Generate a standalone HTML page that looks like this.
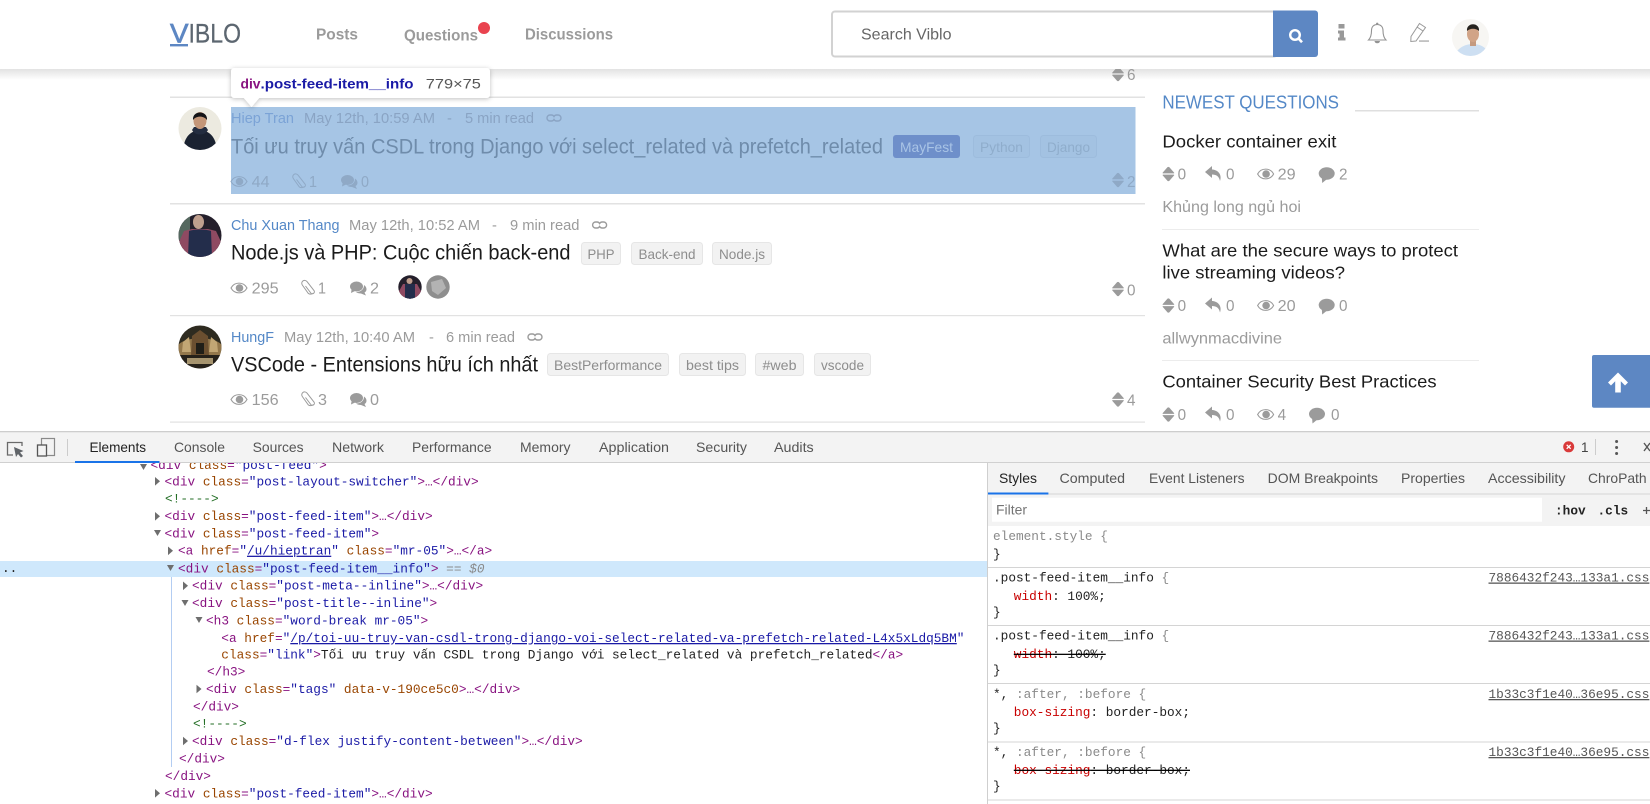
<!DOCTYPE html>
<html lang="vi"><head><meta charset="utf-8"><title>Viblo</title>
<style>
html,body{margin:0;padding:0;background:#fff;overflow:hidden}
svg{display:block;filter:blur(.3px)}
text{font-family:"Liberation Sans",sans-serif;white-space:pre}
.nav{font-size:15.7px;font-weight:700;fill:#9b9b9b}
.au{font-size:14.7px;fill:#5488c7}
.d{font-size:14.7px;fill:#9b9b9b}
.ti{font-size:21px;fill:#1b1b1b}
.tg{font-size:13.8px;fill:#8d8d8d;text-anchor:middle}
.st{font-size:15.8px;fill:#9b9b9b}
.h .au{fill:#7ba3d6}.h .d{fill:#8aa4c4}.h .ti{fill:#6f8cab}.h .st{fill:#8fa9c6}
.sq{font-size:17.8px;fill:#1b1b1b}
.sm{font-size:15.8px;fill:#9b9b9b}
.tb{font-size:13.7px;fill:#555}
.mo text,text.mo{font-family:"Liberation Mono",monospace;font-size:12.78px}
.t{fill:#881280}.n{fill:#994500}.v{fill:#1a1aa6}.c{fill:#236e25}.g{fill:#8a8a8a}.k{fill:#222}.r{fill:#c80000}
</style></head>
<body>
<svg width="1650" height="804" viewBox="0 0 1650 804" xmlns="http://www.w3.org/2000/svg">
<defs>
<linearGradient id="sh" x1="0" y1="0" x2="0" y2="1"><stop offset="0" stop-color="#e2e2e2"/><stop offset="1" stop-color="#fff"/></linearGradient>
<filter id="ds" x="-10%" y="-30%" width="120%" height="170%"><feDropShadow dx="0" dy="1" stdDeviation="2.5" flood-color="#000" flood-opacity=".25"/></filter>
<clipPath id="c1"><ellipse cx="200" cy="128.500" rx="21.500" ry="21.500"/></clipPath>
<clipPath id="c2"><circle cx="200" cy="235.500" r="21.500"/></clipPath>
<clipPath id="c3"><circle cx="200" cy="347" r="21.500"/></clipPath>
<clipPath id="c4"><circle cx="410" cy="287" r="11.700"/></clipPath>
<clipPath id="c5"><circle cx="438" cy="287" r="11.700"/></clipPath>
<clipPath id="c6"><circle cx="1470.500" cy="37.500" r="18.500"/></clipPath>
<g id="eye"><path d="M0 0C3.500-6.500 12.500-6.500 16 0 12.500 6.500 3.500 6.500 0 0Z" fill="none" stroke="currentColor" stroke-width="1.100"/><circle cx="8.500" cy="0" r="3.800" fill="currentColor"/></g>
<g id="clip"><path d="M4.500-2 9.800 5a2 2 0 0 0 3.200-2.400L6-6.400a2.900 2.900 0 0 0-4.700 3.400L7.200 5.300a4 4 0 0 0 5.300-.3" fill="none" stroke="currentColor" stroke-width="1"/></g>
<g id="cm2"><ellipse cx="6.500" cy="-1.500" rx="6.500" ry="5" fill="currentColor"/><path d="M2-1 1 5 6 2.500Z" fill="currentColor"/><path d="M14-3C17-1 17.500 3 14.500 4.500L16 7.500 11 5.500C9 5.500 7 5 6 4 10 4 14 2 14-3Z" fill="currentColor"/></g>
<g id="cm1"><ellipse cx="8" cy="-1" rx="8" ry="6.200" fill="currentColor"/><path d="M3 2 3.500 8.500 9 4Z" fill="currentColor"/></g>
<path id="rp" d="M7-7 0-1 7 5V1.500C11 1.500 14 3 15 8 17.500 1 12-3.500 7-3.500Z" fill="currentColor"/>
<g id="vt"><path d="M5-6.700a1.300 1.300 0 0 1 2 0L11.600-1.500a.5.5 0 0 1-.4.9H.8a.5.5 0 0 1-.4-.9Z" fill="currentColor"/><path d="M.8.600H11.200a.5.5 0 0 1 .4.9L7 6.700a1.300 1.300 0 0 1-2 0L.4 1.500a.5.5 0 0 1 .4-.9Z" fill="currentColor"/></g>
<path id="lnk" d="M5.500-3H4A3 3 0 0 0 4 3H5.500A3 3 0 0 0 8 1.500 3 3 0 0 0 10.500 3H12A3 3 0 0 0 12-3H10.500A3 3 0 0 0 8-1.500 3 3 0 0 0 5.500-3Z" fill="none" stroke="currentColor" stroke-width="1.400"/>
</defs>

<rect width="1650" height="804" fill="#fff"/>

<!-- post list lines -->
<g fill="#e2e2e2"><rect x="170" y="96.500" width="975" height="1.500"/><rect x="170" y="203" width="975" height="1.500"/><rect x="170" y="315" width="975" height="1.200"/><rect x="170" y="421.500" width="975" height="1.200"/></g>

<!-- shadow -->
<rect x="0" y="69" width="1650" height="11" fill="url(#sh)"/>
<use href="#vt" x="1112" y="74" color="#9b9b9b"/>
<text class="st" x="1127" y="80" textLength="8.500" lengthAdjust="spacingAndGlyphs">6</text>

<!-- POST 1 -->
<g clip-path="url(#c1)"><rect x="178" y="107" width="44" height="44" fill="#eceae0"/><path d="M183 151C184 137 190 131 200 130 210 131 216 137 217 151Z" fill="#1a2231"/><path d="M192 130C195 136 205 136 208 130L206 127H194Z" fill="#232d40"/><ellipse cx="200" cy="120.500" rx="6.500" ry="8.500" fill="#c39678"/><path d="M193 120C192 110 208 110 207 120 204 115.500 196 115.500 193 120Z" fill="#141417"/></g>
<rect x="231" y="107" width="904.500" height="87" fill="#a6c5e5"/>
<g class="h">
<text class="au" x="231" y="123" textLength="63" lengthAdjust="spacingAndGlyphs">Hiep Tran</text>
<text class="d" x="304" y="123" textLength="131" lengthAdjust="spacingAndGlyphs">May 12th, 10:59 AM</text>
<text class="d" x="447" y="123">-</text>
<text class="d" x="465" y="123" textLength="69" lengthAdjust="spacingAndGlyphs">5 min read</text>
<use href="#lnk" x="546" y="118" color="#8aa4c4"/>
<text class="ti" x="231" y="153.500" textLength="652" lengthAdjust="spacingAndGlyphs">Tối ưu truy vấn CSDL trong Django với select_related và prefetch_related</text>
<rect x="893" y="135" width="67" height="23" rx="3" fill="#6e8fca"/>
<text class="tg" x="926.500" y="152" style="fill:#a9c4e6" textLength="53" lengthAdjust="spacingAndGlyphs">MayFest</text>
<rect x="973.500" y="135.500" width="56" height="22" rx="3" fill="#a3c2e2" stroke="#9dbcdd"/>
<text class="tg" x="1001.500" y="152" style="fill:#8fadcc" textLength="43" lengthAdjust="spacingAndGlyphs">Python</text>
<rect x="1040.500" y="135.500" width="56" height="22" rx="3" fill="#a3c2e2" stroke="#9dbcdd"/>
<text class="tg" x="1068.500" y="152" style="fill:#8fadcc" textLength="43" lengthAdjust="spacingAndGlyphs">Django</text>
<use href="#eye" x="231" y="181.500" color="#8fa9c6"/>
<text class="st" x="251.600" y="187" textLength="18" lengthAdjust="spacingAndGlyphs">44</text>
<use href="#clip" x="292" y="181.500" color="#8fa9c6"/>
<text class="st" x="309" y="187" textLength="8" lengthAdjust="spacingAndGlyphs">1</text>
<use href="#cm2" x="341" y="181.500" color="#8fa9c6"/>
<text class="st" x="361" y="187" textLength="8" lengthAdjust="spacingAndGlyphs">0</text>
<use href="#vt" x="1112" y="180" color="#8fa9c6"/>
<text class="st" x="1127" y="187" textLength="8.500" lengthAdjust="spacingAndGlyphs">2</text>
</g>

<!-- POST 2 -->
<g clip-path="url(#c2)"><rect x="178" y="214" width="44" height="44" fill="#241f2b"/><path d="M178 214H190V240H178Z" fill="#55685f"/><path d="M178 244 184 231 192 229H208L216 231 222 244 216 258H184Z" fill="#8f4a62"/><path d="M189 231C194 229 206 229 211 231L212 258H188Z" fill="#232d4b"/><ellipse cx="198.500" cy="222" rx="5.500" ry="7" fill="#bf9f8e"/></g>
<text class="au" x="231" y="230" textLength="108.500" lengthAdjust="spacingAndGlyphs">Chu Xuan Thang</text>
<text class="d" x="349" y="230" textLength="131" lengthAdjust="spacingAndGlyphs">May 12th, 10:52 AM</text>
<text class="d" x="492" y="230">-</text>
<text class="d" x="510" y="230" textLength="69.500" lengthAdjust="spacingAndGlyphs">9 min read</text>
<use href="#lnk" x="591.600" y="225" color="#9b9b9b"/>
<text class="ti" x="231" y="259.500" textLength="339.500" lengthAdjust="spacingAndGlyphs">Node.js và PHP: Cuộc chiến back-end</text>
<g fill="#f2f2f2" stroke="#e6e6e6"><rect x="581.500" y="242.500" width="39" height="22" rx="3"/><rect x="631.500" y="242.500" width="71" height="22" rx="3"/><rect x="712.500" y="242.500" width="59" height="22" rx="3"/></g>
<text class="tg" x="601" y="259" textLength="27" lengthAdjust="spacingAndGlyphs">PHP</text>
<text class="tg" x="667" y="259" textLength="57" lengthAdjust="spacingAndGlyphs">Back-end</text>
<text class="tg" x="742" y="259" textLength="46" lengthAdjust="spacingAndGlyphs">Node.js</text>
<use href="#eye" x="231" y="288" color="#9b9b9b"/>
<text class="st" x="251.600" y="293.500" textLength="27" lengthAdjust="spacingAndGlyphs">295</text>
<use href="#clip" x="301" y="288" color="#9b9b9b"/>
<text class="st" x="318" y="293.500" textLength="8" lengthAdjust="spacingAndGlyphs">1</text>
<use href="#cm2" x="350" y="288" color="#9b9b9b"/>
<text class="st" x="370" y="293.500" textLength="9" lengthAdjust="spacingAndGlyphs">2</text>
<g clip-path="url(#c4)"><rect x="398" y="275" width="24" height="24" fill="#241f2b"/><path d="M398 293 403 284H417L422 293V299H398Z" fill="#8f4a62"/><rect x="405" y="284" width="10" height="15" fill="#232d4b"/><circle cx="409.500" cy="281" r="3" fill="#bf9f8e"/></g>
<g clip-path="url(#c5)"><rect x="426" y="275" width="24" height="24" fill="#8e8e8e"/><path d="M431 282 442 279 446 288 438 295 432 291Z" fill="#b3b3b3"/></g>
<use href="#vt" x="1112" y="289" color="#9b9b9b"/>
<text class="st" x="1127" y="295.500" textLength="8.500" lengthAdjust="spacingAndGlyphs">0</text>

<!-- POST 3 -->
<g clip-path="url(#c3)"><rect x="178" y="325" width="44" height="44" fill="#2e2b20"/><path d="M178 345C186 336 214 336 222 345V358H178Z" fill="#94784c"/><path d="M183 342 189 337 191 352H182ZM209 352 211 337 217 342 218 352Z" fill="#c2a674"/><path d="M192 336 200 330 208 336 209 356H191Z" fill="#6b4f30"/><rect x="196" y="343" width="8" height="11" fill="#201e18"/><rect x="178" y="355" width="44" height="14" fill="#26211a"/><rect x="187" y="358" width="26" height="6" fill="#a6946f"/></g>
<text class="au" x="231" y="342" textLength="43" lengthAdjust="spacingAndGlyphs">HungF</text>
<text class="d" x="284" y="342" textLength="131" lengthAdjust="spacingAndGlyphs">May 12th, 10:40 AM</text>
<text class="d" x="429" y="342">-</text>
<text class="d" x="446" y="342" textLength="69" lengthAdjust="spacingAndGlyphs">6 min read</text>
<use href="#lnk" x="527" y="337" color="#9b9b9b"/>
<text class="ti" x="231" y="371.500" textLength="307" lengthAdjust="spacingAndGlyphs">VSCode - Entensions hữu ích nhất</text>
<g fill="#f2f2f2" stroke="#e6e6e6"><rect x="547.500" y="353.500" width="121" height="22" rx="3"/><rect x="679.500" y="353.500" width="66" height="22" rx="3"/><rect x="755.500" y="353.500" width="48" height="22" rx="3"/><rect x="814.500" y="353.500" width="56" height="22" rx="3"/></g>
<text class="tg" x="608" y="370" textLength="108" lengthAdjust="spacingAndGlyphs">BestPerformance</text>
<text class="tg" x="712.500" y="370" textLength="53" lengthAdjust="spacingAndGlyphs">best tips</text>
<text class="tg" x="779.500" y="370" textLength="34" lengthAdjust="spacingAndGlyphs">#web</text>
<text class="tg" x="842.500" y="370" textLength="43" lengthAdjust="spacingAndGlyphs">vscode</text>
<use href="#eye" x="231" y="399.500" color="#9b9b9b"/>
<text class="st" x="251.600" y="405" textLength="27" lengthAdjust="spacingAndGlyphs">156</text>
<use href="#clip" x="301" y="399.500" color="#9b9b9b"/>
<text class="st" x="318" y="405" textLength="9" lengthAdjust="spacingAndGlyphs">3</text>
<use href="#cm2" x="350" y="399.500" color="#9b9b9b"/>
<text class="st" x="370" y="405" textLength="9" lengthAdjust="spacingAndGlyphs">0</text>
<use href="#vt" x="1112" y="399.500" color="#9b9b9b"/>
<text class="st" x="1127" y="405.500" textLength="8.500" lengthAdjust="spacingAndGlyphs">4</text>

<!-- SIDEBAR -->
<text x="1162.400" y="108.500" font-size="18" fill="#5488c7" textLength="176.600" lengthAdjust="spacingAndGlyphs">NEWEST QUESTIONS</text>
<rect x="1355" y="110" width="124" height="1.500" fill="#dfdfdf"/>
<text class="sq" x="1162.400" y="147.500" textLength="174" lengthAdjust="spacingAndGlyphs">Docker container exit</text>
<use href="#vt" x="1162.400" y="174" color="#9b9b9b"/>
<text class="st" x="1177.600" y="179.500" textLength="8.500" lengthAdjust="spacingAndGlyphs">0</text>
<use href="#rp" x="1205" y="173" color="#9b9b9b"/>
<text class="st" x="1226" y="179.500" textLength="8.500" lengthAdjust="spacingAndGlyphs">0</text>
<use href="#eye" x="1257.600" y="174" color="#9b9b9b"/>
<text class="st" x="1277.600" y="179.500" textLength="18" lengthAdjust="spacingAndGlyphs">29</text>
<use href="#cm1" x="1318.700" y="174.500" color="#9b9b9b"/>
<text class="st" x="1339" y="179.500" textLength="8.500" lengthAdjust="spacingAndGlyphs">2</text>
<text class="sm" x="1162.400" y="212" textLength="138.600" lengthAdjust="spacingAndGlyphs">Khủng long ngủ hoi</text>
<rect x="1162" y="229" width="317" height="1" fill="#ececec"/>
<text class="sq" x="1162.400" y="256.500" textLength="295.600" lengthAdjust="spacingAndGlyphs">What are the secure ways to protect</text>
<text class="sq" x="1162.400" y="278.500" textLength="182.600" lengthAdjust="spacingAndGlyphs">live streaming videos?</text>
<use href="#vt" x="1162.400" y="305.500" color="#9b9b9b"/>
<text class="st" x="1177.600" y="311" textLength="8.500" lengthAdjust="spacingAndGlyphs">0</text>
<use href="#rp" x="1205" y="304.500" color="#9b9b9b"/>
<text class="st" x="1226" y="311" textLength="8.500" lengthAdjust="spacingAndGlyphs">0</text>
<use href="#eye" x="1257.600" y="305.500" color="#9b9b9b"/>
<text class="st" x="1277.600" y="311" textLength="18" lengthAdjust="spacingAndGlyphs">20</text>
<use href="#cm1" x="1318.700" y="306" color="#9b9b9b"/>
<text class="st" x="1339" y="311" textLength="8.500" lengthAdjust="spacingAndGlyphs">0</text>
<text class="sm" x="1162.400" y="343.500" textLength="119.600" lengthAdjust="spacingAndGlyphs">allwynmacdivine</text>
<rect x="1162" y="360" width="317" height="1" fill="#ececec"/>
<text class="sq" x="1162.400" y="387.500" textLength="274.200" lengthAdjust="spacingAndGlyphs">Container Security Best Practices</text>
<use href="#vt" x="1162.400" y="414.500" color="#9b9b9b"/>
<text class="st" x="1177.600" y="420" textLength="8.500" lengthAdjust="spacingAndGlyphs">0</text>
<use href="#rp" x="1205" y="413.500" color="#9b9b9b"/>
<text class="st" x="1226" y="420" textLength="8.500" lengthAdjust="spacingAndGlyphs">0</text>
<use href="#eye" x="1257.600" y="414.500" color="#9b9b9b"/>
<text class="st" x="1277.600" y="420" textLength="8.500" lengthAdjust="spacingAndGlyphs">4</text>
<use href="#cm1" x="1309" y="415" color="#9b9b9b"/>
<text class="st" x="1331" y="420" textLength="8.500" lengthAdjust="spacingAndGlyphs">0</text>

<!-- scroll to top -->
<rect x="1592" y="355" width="60" height="52.700" rx="2" fill="#5d87c3"/>
<path d="M1618 372.500 1628 382.500 1625 385.500 1620.800 381.300V392.500H1615.200V381.300L1611 385.500 1608 382.500Z" fill="#fff"/>

<!-- HEADER -->
<rect x="0" y="0" width="1650" height="69" fill="#fff"/>
<rect x="170" y="44" width="18" height="2.400" fill="#5d87c3"/>
<text x="170" y="42.500" font-size="26.500" fill="#5d87c3" stroke="#5d87c3" stroke-width=".7" textLength="18.500" lengthAdjust="spacingAndGlyphs">V</text>
<text x="188.500" y="42.500" font-size="26.500" fill="#5c6670" stroke="#5c6670" stroke-width=".25" textLength="52.500" lengthAdjust="spacingAndGlyphs">IBLO</text>
<text class="nav" x="316" y="39.500" textLength="42" lengthAdjust="spacingAndGlyphs">Posts</text>
<text class="nav" x="404" y="40.500" textLength="74" lengthAdjust="spacingAndGlyphs">Questions</text>
<circle cx="484" cy="28" r="6" fill="#e9434f"/>
<text class="nav" x="525" y="39.500" textLength="88" lengthAdjust="spacingAndGlyphs">Discussions</text>
<rect x="832" y="11.500" width="445" height="45" rx="3" fill="#fff" stroke="#d2d2d2" stroke-width="2"/>
<text x="861" y="39.500" font-size="16" fill="#666" textLength="90.500" lengthAdjust="spacingAndGlyphs">Search Viblo</text>
<path d="M1273 10.500H1315a3 3 0 0 1 3 3V54a3 3 0 0 1-3 3H1273Z" fill="#5d87c3"/>
<circle cx="1295" cy="35" r="4.800" fill="none" stroke="#fff" stroke-width="2.400"/>
<path d="M1298.500 38.500 1302 42.300" stroke="#fff" stroke-width="2.600" fill="none"/>
<path d="M1338.500 24h6v4.500h-6ZM1338 30.500h6v7h1.500v3h-7.500v-3h1.500v-4h-1.500Z" fill="#999"/>
<path d="M1368.500 40C1371.500 37 1371.500 33 1371.500 30.500 1371.500 26.500 1374 24.500 1377.200 24.500 1380.400 24.500 1383 26.500 1383 30.500 1383 33 1383 37 1386 40Z" fill="none" stroke="#939393" stroke-width="1.100"/>
<path d="M1374.500 41a2.800 2.800 0 0 0 5.500 0Z" fill="#939393"/><circle cx="1377.200" cy="23.800" r="1.200" fill="#939393"/>
<path d="M1419.500 23.500 1425.500 27.500 1416 41 1410.800 41.500 1411 36.500ZM1417 27 1423 31" fill="none" stroke="#999" stroke-width="1"/>
<rect x="1419" y="40.500" width="10" height="1.100" fill="#999"/>
<g clip-path="url(#c6)"><rect x="1452" y="19" width="37" height="37" fill="#f7f6f3"/><path d="M1454 56C1458 47 1466 44 1473 44 1480 44 1487 47 1490 56Z" fill="#cddff2"/><rect x="1470" y="39" width="6" height="7" fill="#c49a80"/><ellipse cx="1473" cy="34" rx="6" ry="8" fill="#d1a487"/><path d="M1467 31C1466 22 1480 22 1479 31 1476 28 1470 28 1467 31Z" fill="#26231f"/></g>

<!-- tooltip -->
<g filter="url(#ds)"><rect x="231" y="68" width="259" height="30" rx="3" fill="#fff"/><path d="M243 97 251.600 107 260 97Z" fill="#fff"/></g>
<text x="240.500" y="88.500" font-size="14" font-weight="700" fill="#881280" textLength="20" lengthAdjust="spacingAndGlyphs">div</text>
<text x="260.500" y="88.500" font-size="14" font-weight="700" fill="#1a1aa6" textLength="153" lengthAdjust="spacingAndGlyphs">.post-feed-item__info</text>
<text x="425.800" y="88.500" font-size="14" fill="#555" textLength="55" lengthAdjust="spacingAndGlyphs">779×75</text>

<!-- DEVTOOLS -->
<rect x="0" y="431" width="1650" height="373" fill="#fff"/>
<rect x="0" y="561" width="987" height="16" fill="#cfe8fc"/>
<rect x="171" y="577" width="1" height="190" fill="#b3cdf2"/>
<g fill="#6e6e6e">
<path d="M140 464h7l-3.500 6Z"/>
<path d="M155 477l5 4.300-5 4.300Z"/>
<path d="M155 512l5 4.300-5 4.300Z"/>
<path d="M154 530h7l-3.500 6Z"/>
<path d="M168 546.500l5 4.300-5 4.300Z"/>
<path d="M167 565h7l-3.500 6Z"/>
<path d="M183 581.500l5 4.300-5 4.300Z"/>
<path d="M181.500 600h7l-3.500 6Z"/>
<path d="M195.500 617h7l-3.500 6Z"/>
<path d="M196.500 684.700l5 4.300-5 4.300Z"/>
<path d="M183 736.700l5 4.300-5 4.300Z"/>
<path d="M155 789l5 4.300-5 4.300Z"/>
</g>
<g class="mo">
<text x="150.500" y="469"><tspan class="t">&lt;div </tspan><tspan class="n">class</tspan><tspan class="t">=</tspan><tspan class="v">"post-feed"</tspan><tspan class="t">&gt;</tspan></text>
<text x="164.500" y="485.300"><tspan class="t">&lt;div </tspan><tspan class="n">class</tspan><tspan class="t">=</tspan><tspan class="v">"post-layout-switcher"</tspan><tspan class="t">&gt;…&lt;/div&gt;</tspan></text>
<text x="165" y="502.300" class="c">&lt;!----&gt;</text>
<text x="164.500" y="520"><tspan class="t">&lt;div </tspan><tspan class="n">class</tspan><tspan class="t">=</tspan><tspan class="v">"post-feed-item"</tspan><tspan class="t">&gt;…&lt;/div&gt;</tspan></text>
<text x="164.500" y="537.300"><tspan class="t">&lt;div </tspan><tspan class="n">class</tspan><tspan class="t">=</tspan><tspan class="v">"post-feed-item"</tspan><tspan class="t">&gt;</tspan></text>
<text x="178" y="554.700"><tspan class="t">&lt;a </tspan><tspan class="n">href</tspan><tspan class="t">=</tspan><tspan class="v">"</tspan><tspan class="v" text-decoration="underline">/u/hieptran</tspan><tspan class="v">"</tspan><tspan class="n"> class</tspan><tspan class="t">=</tspan><tspan class="v">"mr-05"</tspan><tspan class="t">&gt;…&lt;/a&gt;</tspan></text>
<text x="2" y="572" class="k">..</text>
<text x="178" y="572.300"><tspan class="t">&lt;div </tspan><tspan class="n">class</tspan><tspan class="t">=</tspan><tspan class="v">"post-feed-item__info"</tspan><tspan class="t">&gt;</tspan><tspan class="g"> == </tspan><tspan class="g" font-style="italic">$0</tspan></text>
<text x="192" y="589.700"><tspan class="t">&lt;div </tspan><tspan class="n">class</tspan><tspan class="t">=</tspan><tspan class="v">"post-meta--inline"</tspan><tspan class="t">&gt;…&lt;/div&gt;</tspan></text>
<text x="192" y="607"><tspan class="t">&lt;div </tspan><tspan class="n">class</tspan><tspan class="t">=</tspan><tspan class="v">"post-title--inline"</tspan><tspan class="t">&gt;</tspan></text>
<text x="206" y="624.300"><tspan class="t">&lt;h3 </tspan><tspan class="n">class</tspan><tspan class="t">=</tspan><tspan class="v">"word-break mr-05"</tspan><tspan class="t">&gt;</tspan></text>
<text x="221.300" y="642"><tspan class="t">&lt;a </tspan><tspan class="n">href</tspan><tspan class="t">=</tspan><tspan class="v">"</tspan><tspan class="v" text-decoration="underline">/p/toi-uu-truy-van-csdl-trong-django-voi-select-related-va-prefetch-related-L4x5xLdq5BM</tspan><tspan class="v">"</tspan></text>
<text x="221.300" y="658.300"><tspan class="n">class</tspan><tspan class="t">=</tspan><tspan class="v">"link"</tspan><tspan class="t">&gt;</tspan><tspan class="k">Tối ưu truy vấn CSDL trong Django với select_related và prefetch_related</tspan><tspan class="t">&lt;/a&gt;</tspan></text>
<text x="207" y="675.700" class="t">&lt;/h3&gt;</text>
<text x="206" y="693"><tspan class="t">&lt;div </tspan><tspan class="n">class</tspan><tspan class="t">=</tspan><tspan class="v">"tags"</tspan><tspan class="n"> data-v-190ce5c0</tspan><tspan class="t">&gt;…&lt;/div&gt;</tspan></text>
<text x="193" y="710.300" class="t">&lt;/div&gt;</text>
<text x="193" y="727.700" class="c">&lt;!----&gt;</text>
<text x="192" y="745"><tspan class="t">&lt;div </tspan><tspan class="n">class</tspan><tspan class="t">=</tspan><tspan class="v">"d-flex justify-content-between"</tspan><tspan class="t">&gt;…&lt;/div&gt;</tspan></text>
<text x="179" y="762.700" class="t">&lt;/div&gt;</text>
<text x="165" y="780" class="t">&lt;/div&gt;</text>
<text x="164.500" y="797.300"><tspan class="t">&lt;div </tspan><tspan class="n">class</tspan><tspan class="t">=</tspan><tspan class="v">"post-feed-item"</tspan><tspan class="t">&gt;…&lt;/div&gt;</tspan></text>
</g>

<!-- toolbar -->
<rect x="0" y="431" width="1650" height="31.500" fill="#f3f3f3"/>
<rect x="0" y="431" width="1650" height="1.300" fill="#cdcdcd"/>
<rect x="0" y="462" width="1650" height="1" fill="#d0d0d0"/>
<path d="M13 455H7.500V442.500H22V446" fill="none" stroke="#6a6a6a" stroke-width="1.300"/>
<path d="M14 447 23.500 451 20 452.500 23 456 21 457.500 18 454 16 457Z" fill="#5f6368"/>
<rect x="41.500" y="438.500" width="13" height="17" fill="none" stroke="#8a8a8a" stroke-width="1.200"/>
<rect x="37.500" y="445" width="9" height="11" fill="#f3f3f3" stroke="#555" stroke-width="1.300"/>
<rect x="67" y="439" width="1" height="17" fill="#ccc"/>
<g class="tb">
<text x="89.500" y="452" style="fill:#222" textLength="56.500" lengthAdjust="spacingAndGlyphs">Elements</text>
<text x="174" y="452" textLength="51" lengthAdjust="spacingAndGlyphs">Console</text>
<text x="252.600" y="452" textLength="51" lengthAdjust="spacingAndGlyphs">Sources</text>
<text x="332" y="452" textLength="52" lengthAdjust="spacingAndGlyphs">Network</text>
<text x="412" y="452" textLength="79.600" lengthAdjust="spacingAndGlyphs">Performance</text>
<text x="520" y="452" textLength="50.500" lengthAdjust="spacingAndGlyphs">Memory</text>
<text x="599" y="452" textLength="70" lengthAdjust="spacingAndGlyphs">Application</text>
<text x="696" y="452" textLength="51" lengthAdjust="spacingAndGlyphs">Security</text>
<text x="774" y="452" textLength="39.700" lengthAdjust="spacingAndGlyphs">Audits</text>
</g>
<rect x="75" y="461" width="84.500" height="2" fill="#1a73e8"/>
<circle cx="1568.700" cy="446.800" r="5.500" fill="#d93a3a"/>
<path d="M1566.700 444.800l4 4M1570.700 444.800l-4 4" stroke="#fff" stroke-width="1.300"/>
<text x="1581" y="452" font-size="13.500" fill="#444">1</text>
<rect x="1595" y="439" width="1" height="16" fill="#ccc"/>
<g fill="#555"><circle cx="1616.600" cy="441.500" r="1.500"/><circle cx="1616.600" cy="447.500" r="1.500"/><circle cx="1616.600" cy="453.500" r="1.500"/></g>
<path d="M1644 443l6 8M1650 443l-6 8" stroke="#555" stroke-width="1.400"/>

<!-- styles panel -->
<rect x="987" y="463" width="663" height="341" fill="#fff"/>
<rect x="987" y="463" width="1" height="341" fill="#cfcfcf"/>
<rect x="988" y="463" width="662" height="63" fill="#f3f3f3"/>
<rect x="988" y="493.500" width="662" height="1" fill="#d5d5d5"/>
<g class="tb">
<text x="999" y="483" style="fill:#222" textLength="38" lengthAdjust="spacingAndGlyphs">Styles</text>
<text x="1059.500" y="483" textLength="65.500" lengthAdjust="spacingAndGlyphs">Computed</text>
<text x="1149" y="483" textLength="95.500" lengthAdjust="spacingAndGlyphs">Event Listeners</text>
<text x="1267.600" y="483" textLength="110.400" lengthAdjust="spacingAndGlyphs">DOM Breakpoints</text>
<text x="1401" y="483" textLength="64" lengthAdjust="spacingAndGlyphs">Properties</text>
<text x="1488" y="483" textLength="77.500" lengthAdjust="spacingAndGlyphs">Accessibility</text>
<text x="1588" y="483" textLength="58.600" lengthAdjust="spacingAndGlyphs">ChroPath</text>
</g>
<rect x="988" y="492.500" width="60.400" height="2" fill="#1a73e8"/>
<rect x="992" y="497.700" width="550" height="24" fill="#fff"/>
<text x="996" y="514.500" font-size="13.500" fill="#757575" textLength="31" lengthAdjust="spacingAndGlyphs">Filter</text>
<g class="mo">
<text x="1555" y="514.500" class="k" font-weight="700">:hov</text>
<text x="1597.500" y="514.500" class="k" font-weight="700">.cls</text>
</g>
<path d="M1643 510.500h7M1646.500 507v7" stroke="#555" stroke-width="1.300"/>
<g fill="#d4d4d4"><rect x="988" y="567" width="662" height="1"/><rect x="988" y="625" width="662" height="1"/><rect x="988" y="683" width="662" height="1"/><rect x="988" y="741.500" width="662" height="1"/><rect x="988" y="799.500" width="662" height="1"/></g>
<g class="mo">
<text x="993" y="540" class="g">element.style {</text>
<text x="993" y="558" class="k">}</text>

<text x="993" y="581.500"><tspan class="k">.post-feed-item__info</tspan><tspan class="g"> {</tspan></text>
<text x="1013.800" y="600"><tspan class="r">width</tspan><tspan class="k">: 100%;</tspan></text>
<text x="993" y="616" class="k">}</text>
<text x="1488.500" y="581.500" fill="#555" text-decoration="underline">7886432f243…133a1.css</text>

<text x="993" y="639.500"><tspan class="k">.post-feed-item__info</tspan><tspan class="g"> {</tspan></text>
<text x="1013.800" y="658" text-decoration="line-through"><tspan class="r">width</tspan><tspan class="k">: 100%;</tspan></text>
<text x="993" y="674" class="k">}</text>
<text x="1488.500" y="639.500" fill="#555" text-decoration="underline">7886432f243…133a1.css</text>

<text x="993" y="698"><tspan class="k">*, </tspan><tspan class="g">:after, :before {</tspan></text>
<text x="1013.800" y="716"><tspan class="r">box-sizing</tspan><tspan class="k">: border-box;</tspan></text>
<text x="993" y="732" class="k">}</text>
<text x="1488.500" y="698" fill="#555" text-decoration="underline">1b33c3f1e40…36e95.css</text>

<text x="993" y="756"><tspan class="k">*, </tspan><tspan class="g">:after, :before {</tspan></text>
<text x="1013.800" y="774" text-decoration="line-through"><tspan class="r">box-sizing</tspan><tspan class="k">: border-box;</tspan></text>
<text x="993" y="790" class="k">}</text>
<text x="1488.500" y="756" fill="#555" text-decoration="underline">1b33c3f1e40…36e95.css</text>
</g>
</svg>
</body></html>
